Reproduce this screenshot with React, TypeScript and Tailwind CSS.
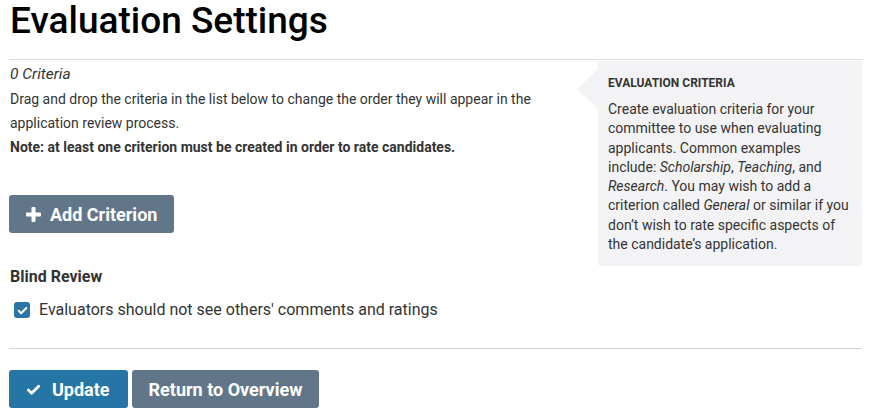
import React from 'react'

function Plus() {
  return (
    <svg viewBox="0 0 15 15" className="w-[15px] h-[15px]" fill="currentColor">
      <rect x="5.5" y="0" width="4" height="15" rx="1" />
      <rect x="0" y="5.5" width="15" height="4" rx="1" />
    </svg>
  )
}

function Check({ className }: { className?: string }) {
  return (
    <svg viewBox="0 0 16 16" className={className} fill="none" stroke="currentColor" strokeWidth="3" strokeLinecap="round" strokeLinejoin="round">
      <path d="M2.5 8.5l3.5 3.5 7.5-7.5" />
    </svg>
  )
}

export default function App() {
  return (
    <div className="font-['Roboto',sans-serif] text-[#333] bg-white w-[869px] h-[412px] overflow-hidden pl-[9px] pr-[7px]">
      <h1 className="text-[37px] font-medium leading-[44px] text-black pl-[1px] -mt-[1px]">Evaluation Settings</h1>

      <div className="border-t border-[#dcdcdc] mt-[16px] flex">
        <div className="flex-1 pt-[5px]">
          <p className="italic text-[15.5px] leading-[18px] pl-[1px]">0 Criteria</p>
          <p className="text-[14px] leading-[24px] pl-[1px] mt-[4px]">
            Drag and drop the criteria in the list below to change the order they will appear in the
            <br />
            application review process.
          </p>
          <p className="text-[14px] leading-[24px] font-bold pl-[1px]">
            Note: at least one criterion must be created in order to rate candidates.
          </p>

          <button className="mt-[36px] h-[38px] px-[17px] rounded-[3px] bg-[#627689] text-white font-bold text-[18px] flex items-center gap-[9px]">
            <Plus />
            Add Criterion
          </button>

          <h3 className="font-bold text-[16px] leading-[20px] mt-[34px] pl-[1px]">Blind Review</h3>
          <label className="flex items-center gap-[9px] mt-[13px] pl-[5px]">
            <span className="w-[16px] h-[16px] rounded-[3px] bg-[#2a76a7] text-white flex items-center justify-center">
              <Check className="w-[11px] h-[11px]" />
            </span>
            <span className="text-[16px] leading-[20px]">Evaluators should not see others' comments and ratings</span>
          </label>
        </div>

        <div className="relative w-[264px] mt-[1px] h-[205px] bg-[#f3f3f5] rounded-[3px] px-[10px] pt-[13px] self-start">
          <div className="absolute -left-[21px] top-[8px] w-0 h-0 border-y-[20px] border-y-transparent border-r-[21px] border-r-[#f3f3f5]" />
          <h4 className="font-bold text-[12px] leading-[18px] uppercase">Evaluation Criteria</h4>
          <p className="text-[14px] leading-[19.3px] mt-[8px]">
            Create evaluation criteria for your committee to use when evaluating applicants. Common examples include:{' '}
            <i>Scholarship</i>, <i>Teaching</i>, and <i>Research</i>. You may wish to add a criterion called <i>General</i> or
            similar if you don’t wish to rate specific aspects of the candidate’s application.
          </p>
        </div>
      </div>

      <div className="border-t border-[#d4d4d4] mt-[28px] flex gap-[4px] pt-[21px]">
        <button className="h-[38px] pl-[17px] pr-[18px] rounded-[3px] bg-[#2576a5] text-white font-bold text-[18px] flex items-center gap-[11px]">
          <Check className="w-[15px] h-[15px]" />
          Update
        </button>
        <button className="h-[38px] px-[17px] rounded-[3px] bg-[#627689] text-white font-bold text-[18px]">
          Return to Overview
        </button>
      </div>
    </div>
  )
}
